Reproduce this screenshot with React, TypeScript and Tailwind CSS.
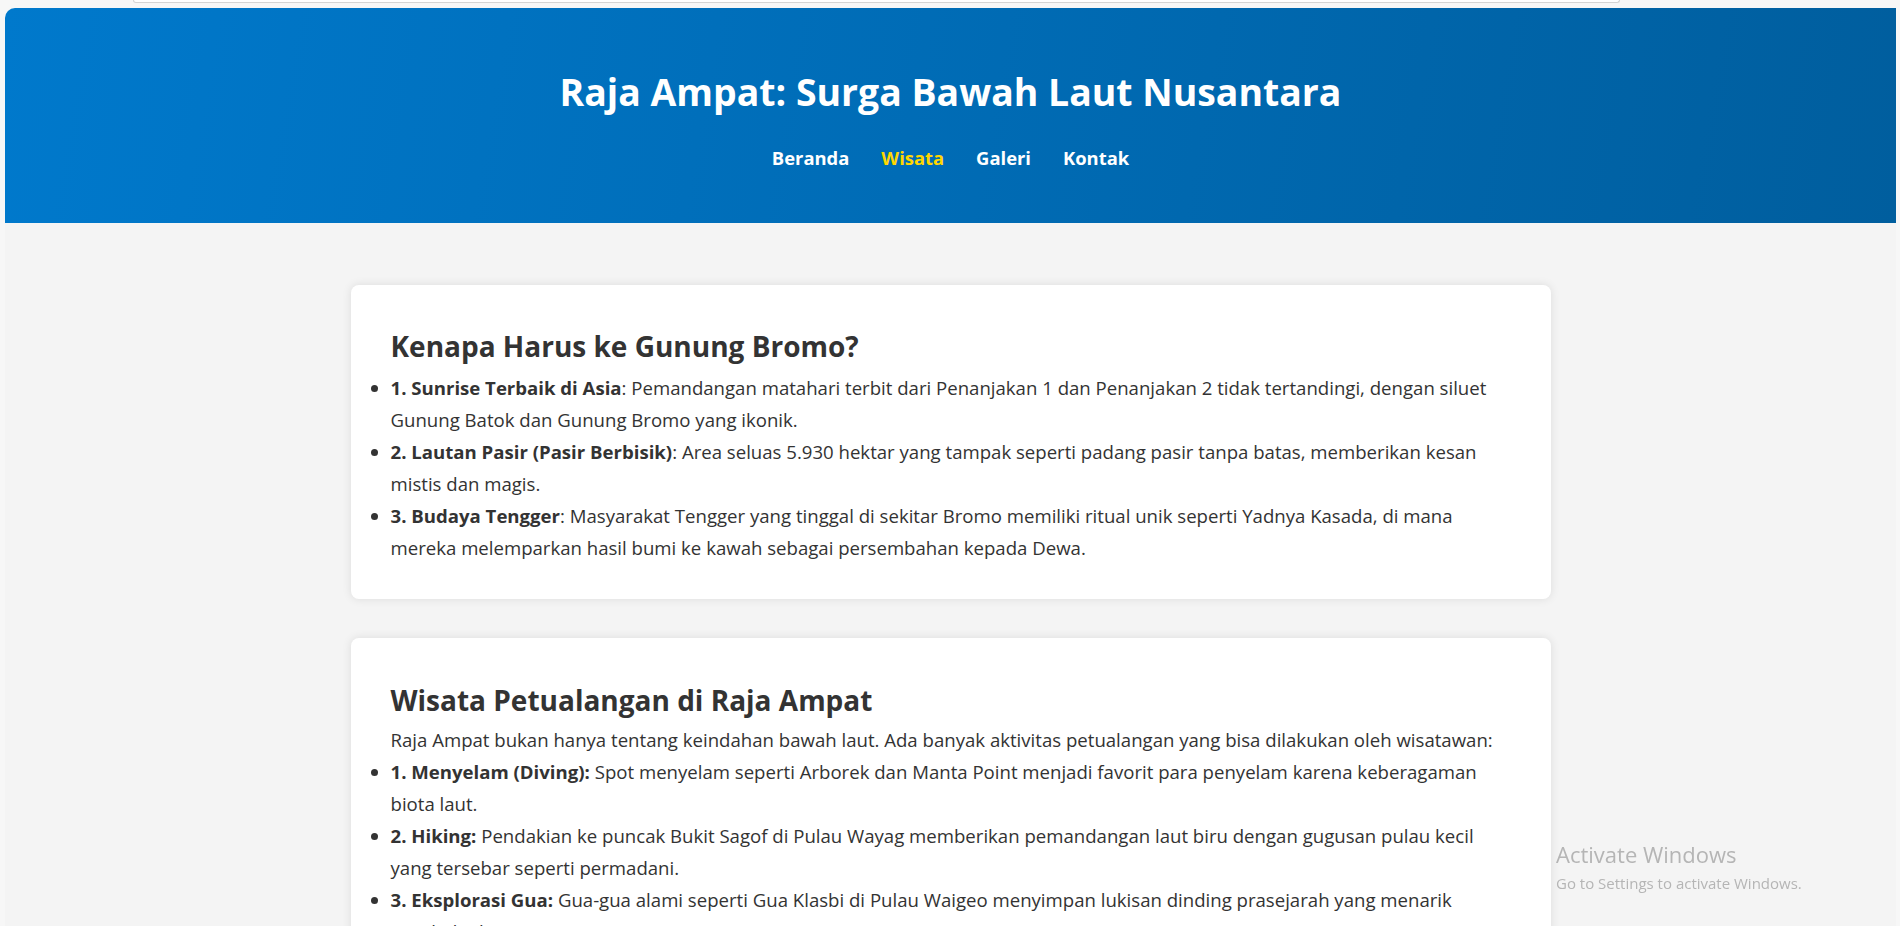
const highlights = [
  {
    title: "1. Sunrise Terbaik di Asia",
    text: ": Pemandangan matahari terbit dari Penanjakan 1 dan Penanjakan 2 tidak tertandingi, dengan siluet\nGunung Batok dan Gunung Bromo yang ikonik.",
  },
  {
    title: "2. Lautan Pasir (Pasir Berbisik)",
    text: ": Area seluas 5.930 hektar yang tampak seperti padang pasir tanpa batas, memberikan kesan\nmistis dan magis.",
  },
  {
    title: "3. Budaya Tengger",
    text: ": Masyarakat Tengger yang tinggal di sekitar Bromo memiliki ritual unik seperti Yadnya Kasada, di mana\nmereka melemparkan hasil bumi ke kawah sebagai persembahan kepada Dewa.",
  },
];

const adventures = [
  {
    title: "1. Menyelam (Diving):",
    text: " Spot menyelam seperti Arborek dan Manta Point menjadi favorit para penyelam karena keberagaman\nbiota laut.",
  },
  {
    title: "2. Hiking:",
    text: " Pendakian ke puncak Bukit Sagof di Pulau Wayag memberikan pemandangan laut biru dengan gugusan pulau kecil\nyang tersebar seperti permadani.",
  },
  {
    title: "3. Eksplorasi Gua:",
    text: " Gua-gua alami seperti Gua Klasbi di Pulau Waigeo menyimpan lukisan dinding prasejarah yang menarik\nuntuk diteliti.",
  },
];

const navLinks = ["Beranda", "Wisata", "Galeri", "Kontak"];

const List = ({ items }: { items: { title: string; text: string }[] }) => (
  <ul className="list-disc list-outside">
    {items.map((item) => (
      <li key={item.title} className="whitespace-pre-line">
        <strong className="font-bold">{item.title}</strong>
        {item.text}
      </li>
    ))}
  </ul>
);

const App = () => {
  return (
    <div className="min-h-screen bg-[#f7f7f7] font-['Open_Sans',sans-serif]">
      {/* browser chrome strip */}
      <div className="h-[8px] overflow-hidden">
        <div className="ml-[133px] w-[1487px] h-[3px] bg-white border border-t-0 border-[#d4d4d4] rounded-b-[4px]" />
      </div>

      <div className="ml-[5px] mr-[4px] min-h-[918px] rounded-tl-[10px] overflow-hidden bg-[#f4f4f4]">
        {/* header */}
        <header className="h-[215px] bg-[linear-gradient(100deg,#0079cc,#005e9e)] flex flex-col items-center pt-[65px]">
          <h1 className="text-[37.4px] leading-[37px] font-bold text-white">
            Raja Ampat: Surga Bawah Laut Nusantara
          </h1>
          <nav className="mt-[39px] flex gap-[32px]">
            {navLinks.map((link) => (
              <a
                key={link}
                href="#"
                className={`text-[18.4px] leading-[18px] font-bold ${
                  link === "Wisata" ? "text-[#ffd700]" : "text-white"
                }`}
              >
                {link}
              </a>
            ))}
          </nav>
        </header>

        {/* content */}
        <main className="max-w-[1200px] mx-auto pt-[62px] pb-10 flex flex-col gap-[39px] text-[#333] text-[18.6px] leading-[32px]">
          <section className="bg-white rounded-lg shadow-[0_0_10px_rgba(0,0,0,0.1)] pl-[40px] pr-[28px] pt-[47px] pb-[35px]">
            <h2 className="text-[28px] leading-[28px] font-bold mb-[12px]">
              Kenapa Harus ke Gunung Bromo?
            </h2>
            <List items={highlights} />
          </section>

          <section className="bg-white rounded-lg shadow-[0_0_10px_rgba(0,0,0,0.1)] pl-[40px] pr-[28px] pt-[48px] pb-[35px]">
            <h2 className="text-[28px] leading-[28px] font-bold mb-[10px]">
              Wisata Petualangan di Raja Ampat
            </h2>
            <p>
              Raja Ampat bukan hanya tentang keindahan bawah laut. Ada banyak aktivitas petualangan yang bisa
              dilakukan oleh wisatawan:
            </p>
            <List items={adventures} />
          </section>
        </main>
      </div>

      {/* windows watermark */}
      <div className="fixed left-[1556px] top-[843px] text-[#b5b5b5] pointer-events-none">
        <p className="text-[22px] leading-[22px]">Activate Windows</p>
        <p className="mt-[11px] text-[15px] leading-[15px]">Go to Settings to activate Windows.</p>
      </div>
    </div>
  );
};

export default App;
